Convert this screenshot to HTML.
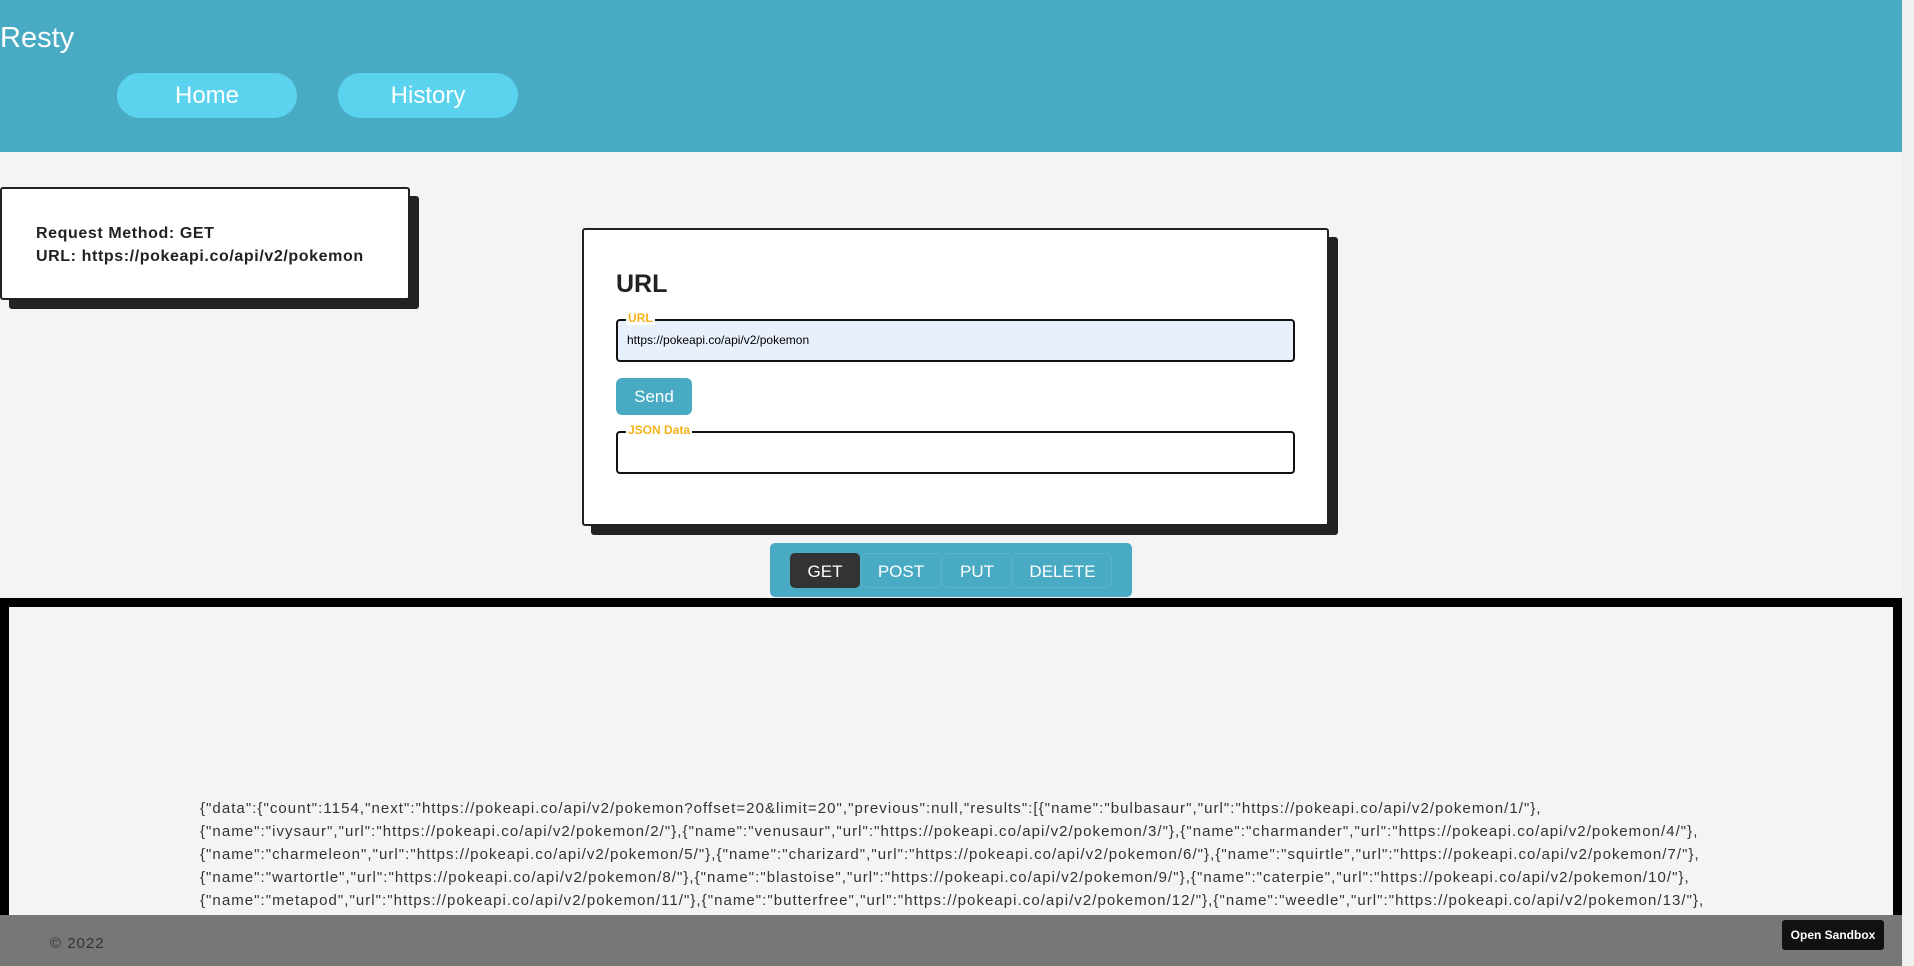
<!DOCTYPE html>
<html><head><meta charset="utf-8"><style>
*{box-sizing:border-box;margin:0;padding:0}
body{width:1914px;height:966px;overflow:hidden;background:#f4f4f4;font-family:"Liberation Sans",sans-serif;position:relative}
.hdr{position:absolute;left:0;top:0;width:1902px;height:152px;background:#48abc3}
.title{position:absolute;left:0;top:22px;font-size:29px;color:#fff;font-weight:300}
.nav{position:absolute;top:73px;width:180px;height:45px;border-radius:23px;background:#5bd3ef;color:#fff;font-size:24px;text-align:center;line-height:45px}
.box{position:absolute;background:#fff;border:2px solid #222;border-radius:3px;box-shadow:9px 9px 0 #222}
.info{left:0;top:187px;width:410px;height:113px;font-weight:bold;font-size:16px;color:#222;padding:33px 0 0 34px;line-height:23px;letter-spacing:0.6px}
.card{left:582px;top:228px;width:747px;height:298px}
.card h2{position:absolute;left:32px;top:40px;font-size:25px;color:#222}
.fld{position:absolute;left:32px;width:679px;height:43px;border:2.5px solid #111;border-radius:4px}
.fld span{position:absolute;left:8px;top:-10px;background:#fff;color:#f5b21b;font-size:12px;font-weight:bold;padding:0 2px}
.send{position:absolute;left:32px;top:148px;width:76px;height:37px;background:#48abc3;border-radius:6px;color:#fff;font-size:17px;text-align:center;line-height:37px}
.bar{position:absolute;left:770px;top:543px;width:362px;height:54px;background:#48abc3;border-radius:5px}
.m{position:absolute;top:10px;height:35px;color:#fff;font-size:17px;text-align:center;line-height:35px;border-radius:5px;border:1px solid #55b5cc}
.out{position:absolute;left:0;top:598px;width:1902px;height:330px;border:9px solid #000;border-bottom:none;background:#f4f4f4}
.json{position:absolute;left:200px;top:797px;font-size:15px;color:#333;line-height:23px;white-space:pre;letter-spacing:1.05px}
.ftr{position:absolute;left:0;top:915px;width:1902px;height:51px;background:#777}
.sb{position:absolute;right:0;top:0;width:12px;height:966px;background:#f0f0f0}
</style></head><body>
<div class="hdr"><div class="title">Resty</div>
<div class="nav" style="left:117px">Home</div><div class="nav" style="left:338px">History</div></div>
<div class="box info">Request Method: GET<br>URL: https://pokeapi.co/api/v2/pokemon</div>
<div class="box card"><h2>URL</h2>
<div class="fld" style="top:89px;background:#e8f0fe"><span>URL</span><div style="position:absolute;left:9px;top:12px;font-size:12px;color:#000">https://pokeapi.co/api/v2/pokemon</div></div>
<div class="send">Send</div>
<div class="fld" style="top:201px"><span>JSON Data</span></div></div>
<div class="bar"><div class="m" style="left:20px;width:70px;background:#333;border-color:#333">GET</div><div class="m" style="left:91px;width:80px">POST</div><div class="m" style="left:172px;width:70px">PUT</div><div class="m" style="left:243px;width:99px">DELETE</div></div>
<div class="out"></div>
<div class="json">{"data":{"count":1154,"next":"https://pokeapi.co/api/v2/pokemon?offset=20&amp;limit=20","previous":null,"results":[{"name":"bulbasaur","url":"https://pokeapi.co/api/v2/pokemon/1/"},
{"name":"ivysaur","url":"https://pokeapi.co/api/v2/pokemon/2/"},{"name":"venusaur","url":"https://pokeapi.co/api/v2/pokemon/3/"},{"name":"charmander","url":"https://pokeapi.co/api/v2/pokemon/4/"},
{"name":"charmeleon","url":"https://pokeapi.co/api/v2/pokemon/5/"},{"name":"charizard","url":"https://pokeapi.co/api/v2/pokemon/6/"},{"name":"squirtle","url":"https://pokeapi.co/api/v2/pokemon/7/"},
{"name":"wartortle","url":"https://pokeapi.co/api/v2/pokemon/8/"},{"name":"blastoise","url":"https://pokeapi.co/api/v2/pokemon/9/"},{"name":"caterpie","url":"https://pokeapi.co/api/v2/pokemon/10/"},
{"name":"metapod","url":"https://pokeapi.co/api/v2/pokemon/11/"},{"name":"butterfree","url":"https://pokeapi.co/api/v2/pokemon/12/"},{"name":"weedle","url":"https://pokeapi.co/api/v2/pokemon/13/"},</div>
<div class="ftr"><div style="position:absolute;left:50px;top:20px;font-size:15px;color:#333;letter-spacing:1px">© 2022</div>
<div style="position:absolute;left:1782px;top:5px;width:102px;height:30px;background:#111;border-radius:3px;color:#fff;font-size:12px;font-weight:bold;text-align:center;line-height:30px">Open Sandbox</div></div>
<div class="sb"></div>
</body></html>
